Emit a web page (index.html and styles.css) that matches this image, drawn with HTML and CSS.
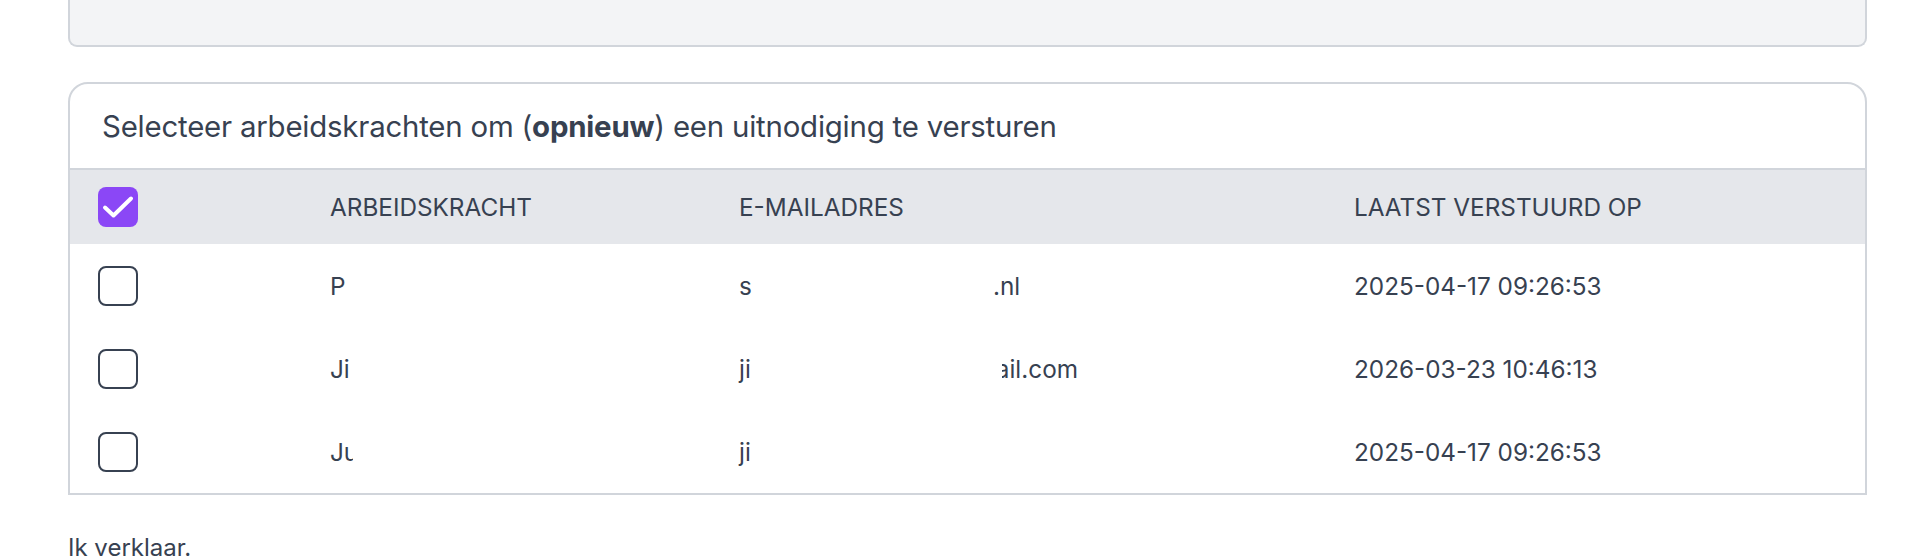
FILE: index.html
```html
<!DOCTYPE html>
<html lang="nl">
<head>
<meta charset="utf-8">
<title>Uitnodigingen</title>
<link rel="stylesheet" href="styles.css">
</head>
<body>
<main class="page">
  <div class="top-box"></div>

  <section class="card">
    <div class="card-title">Selecteer arbeidskrachten om (<strong>opnieuw</strong>) een uitnodiging te versturen</div>
    <div class="grid head">
      <div class="cell"><span class="cb checked"><svg viewBox="0 0 40 40" width="40" height="40"><path d="M7 20.5 L15.5 28.5 L33 11.5" fill="none" stroke="#fff" stroke-width="4" stroke-linecap="round" stroke-linejoin="round"/></svg></span></div>
      <div class="cell">ARBEIDSKRACHT</div>
      <div class="cell">E-MAILADRES</div>
      <div class="cell">LAATST VERSTUURD OP</div>
    </div>
    <div class="grid row">
      <div class="cell"><span class="cb"></span></div>
      <div class="cell">P</div>
      <div class="cell"><span class="mail-a">s</span><span class="mail-b">.nl</span></div>
      <div class="cell">2025-04-17 09:26:53</div>
    </div>
    <div class="grid row">
      <div class="cell"><span class="cb"></span></div>
      <div class="cell">Ji</div>
      <div class="cell"><span class="mail-a wide">ji</span><span class="mail-b clip-left"><span>gmail.com</span></span></div>
      <div class="cell">2026-03-23 10:46:13</div>
    </div>
    <div class="grid row">
      <div class="cell"><span class="cb"></span></div>
      <div class="cell"><span class="clip-right">Ju</span></div>
      <div class="cell"><span class="mail-a">ji</span></div>
      <div class="cell">2025-04-17 09:26:53</div>
    </div>
  </section>

  <p class="declare">Ik verklaar.</p>
</main>
</body>
</html>
```

FILE: styles.css
```css
html, body {
  margin: 0;
  padding: 0;
  background: #ffffff;
}

body {
  font-family: Inter, "Noto Sans", "Liberation Sans", sans-serif;
  color: #374151;
  overflow: hidden;
}

.page {
  padding: 0 41px 0 68px;
}

.top-box {
  height: 45px;
  background: #f3f4f6;
  border: 2px solid #d1d5db;
  border-top: none;
  border-radius: 0 0 9px 9px;
}

.card {
  margin-top: 35px;
  border: 2px solid #d1d5db;
  border-radius: 20px 20px 0 0;
  overflow: hidden;
}

.card-title {
  height: 84px;
  display: flex;
  align-items: center;
  padding-left: 32px;
  font-size: 29.4px;
  letter-spacing: -0.2px;
  border-bottom: 2px solid #d1d5db;
}

.card-title strong {
  font-weight: 700;
}

.grid {
  display: grid;
  grid-template-columns: 232px 409px 615px 1fr;
  padding-left: 28px;
  align-items: center;
  font-size: 24.3px;
}

.head {
  height: 74px;
  background: #e5e7eb;
}

.row {
  height: 83px;
}

.cell {
  white-space: nowrap;
  display: flex;
  align-items: center;
}

.cb {
  display: block;
  box-sizing: border-box;
  width: 40px;
  height: 40px;
  border: 2.5px solid #374151;
  border-radius: 8px;
  background: #fff;
}

.cb.checked {
  border: none;
  background: #8b47f6;
}

.cb svg {
  display: block;
}

.mail-a {
  display: inline-block;
  width: 254px;
}

.mail-a.wide {
  width: 263px;
}

.mail-b {
  display: inline-block;
}

.clip-left {
  width: 76px;
  overflow: hidden;
  direction: rtl;
}

.clip-left span {
  direction: ltr;
  unicode-bidi: embed;
}

.clip-right {
  display: inline-block;
  width: 23px;
  overflow: hidden;
}

.declare {
  margin: 38px 0 0;
  font-size: 24px;
}
```
